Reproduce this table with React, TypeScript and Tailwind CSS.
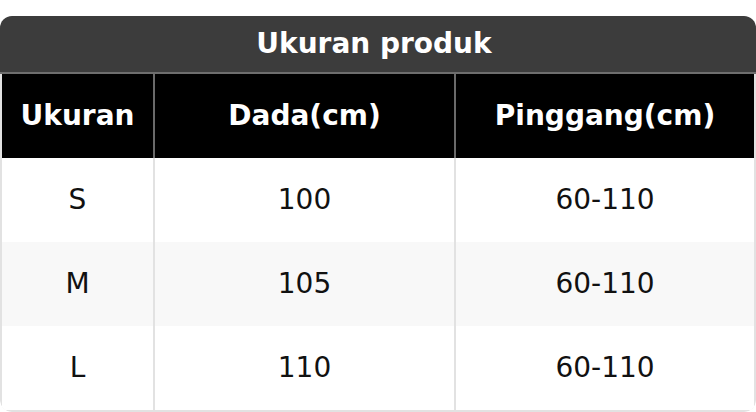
const rows = [
  { size: 'S', chest: '100', waist: '60-110' },
  { size: 'M', chest: '105', waist: '60-110' },
  { size: 'L', chest: '110', waist: '60-110' },
]

export default function App() {
  return (
    <div className="h-[412px] w-[756px] bg-white pt-[16px] font-['DejaVu_Sans',sans-serif] text-[28px]">
      <div className="overflow-hidden rounded-[12px]">
        <div className="flex h-[58px] items-center justify-center border-b-2 border-[#6e6e6e] bg-[#3c3c3c] pr-[8px] font-bold text-white">
          Ukuran produk
        </div>
        <div className="rounded-b-[12px] border-x-2 border-b-2 border-[#e2e2e2]">
          <div className="flex h-[84px] bg-black font-bold text-white">
            <div className="flex w-[153px] items-center justify-center border-r-2 border-[#6a6a6a]">Ukuran</div>
            <div className="flex w-[301px] items-center justify-center border-r-2 border-[#6a6a6a]">Dada(cm)</div>
            <div className="flex flex-1 items-center justify-center">Pinggang(cm)</div>
          </div>
          {rows.map((row, i) => (
            <div key={row.size} className={`flex h-[84px] text-[#111] ${i === 1 ? 'bg-[#f8f8f8]' : 'bg-white'}`}>
              <div className="flex w-[153px] items-center justify-center border-r-2 border-[#e2e2e2]">{row.size}</div>
              <div className="flex w-[301px] items-center justify-center border-r-2 border-[#e2e2e2]">{row.chest}</div>
              <div className="flex flex-1 items-center justify-center">{row.waist}</div>
            </div>
          ))}
        </div>
      </div>
    </div>
  )
}
